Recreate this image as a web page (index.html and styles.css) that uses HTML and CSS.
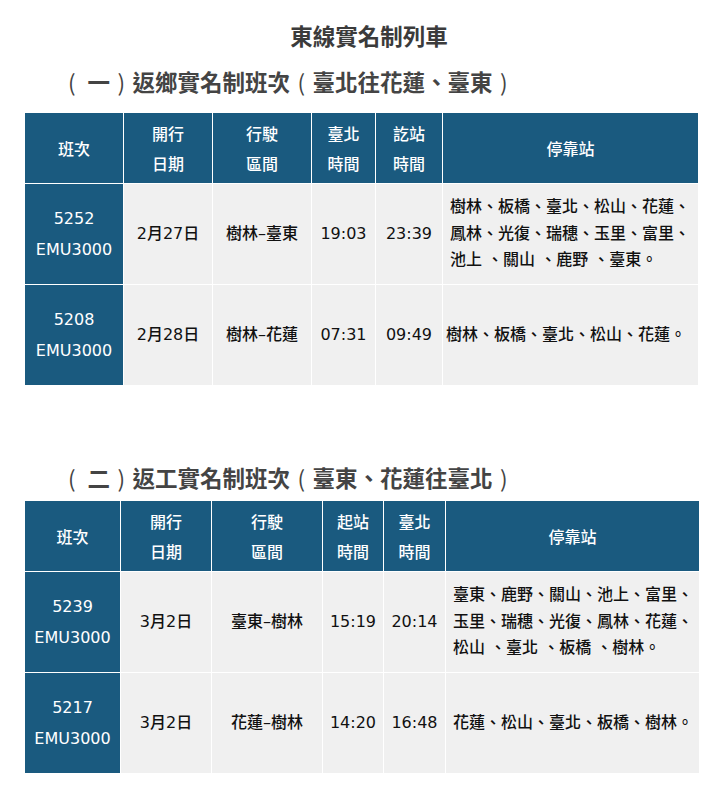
FILE: index.html
```html
<!DOCTYPE html>
<html lang="zh-Hant">
<head>
<meta charset="utf-8">
<title>東線實名制列車</title>
<link rel="stylesheet" href="styles.css">
</head>
<body>
<div class="page">
  <h1 class="title">東線實名制列車</h1>

  <h2 class="section-title"><span class="paren paren-open">(</span>一<span class="paren">)</span>返鄉實名制班次<span class="paren">(</span>臺北往花蓮、臺東<span class="paren">)</span></h2>
  <table class="schedule schedule-a">
    <colgroup>
      <col class="col-train"><col class="col-date"><col class="col-route"><col class="col-t1"><col class="col-t2"><col class="col-stops">
    </colgroup>
    <thead>
      <tr><th>班次</th><th>開行<br>日期</th><th>行駛<br>區間</th><th>臺北<br>時間</th><th>訖站<br>時間</th><th>停靠站</th></tr>
    </thead>
    <tbody>
      <tr>
        <th class="train">5252<br>EMU3000</th><td>2月27日</td><td>樹林–臺東</td><td>19:03</td><td>23:39</td>
        <td class="stops">樹林、板橋、臺北、松山、花蓮、鳳林、光復、瑞穗、玉里、富里、池上 、關山 、鹿野 、臺東。</td>
      </tr>
      <tr>
        <th class="train">5208<br>EMU3000</th><td>2月28日</td><td>樹林–花蓮</td><td>07:31</td><td>09:49</td>
        <td class="stops stops-single">樹林、板橋、臺北、松山、花蓮。</td>
      </tr>
    </tbody>
  </table>

  <h2 class="section-title section-second"><span class="paren paren-open">(</span>二<span class="paren">)</span>返工實名制班次<span class="paren">(</span>臺東、花蓮往臺北<span class="paren">)</span></h2>
  <table class="schedule schedule-b">
    <colgroup>
      <col class="col-train"><col class="col-date"><col class="col-route"><col class="col-t1"><col class="col-t2"><col class="col-stops">
    </colgroup>
    <thead>
      <tr><th>班次</th><th>開行<br>日期</th><th>行駛<br>區間</th><th>起站<br>時間</th><th>臺北<br>時間</th><th>停靠站</th></tr>
    </thead>
    <tbody>
      <tr>
        <th class="train">5239<br>EMU3000</th><td>3月2日</td><td>臺東–樹林</td><td>15:19</td><td>20:14</td>
        <td class="stops">臺東、鹿野、關山、池上、富里、玉里、瑞穗、光復、鳳林、花蓮、松山 、臺北 、板橋 、樹林。</td>
      </tr>
      <tr>
        <th class="train">5217<br>EMU3000</th><td>3月2日</td><td>花蓮–樹林</td><td>14:20</td><td>16:48</td>
        <td class="stops">花蓮、松山、臺北、板橋、樹林。</td>
      </tr>
    </tbody>
  </table>
</div>
</body>
</html>
```

FILE: styles.css
```css
html, body {
  margin: 0;
  padding: 0;
  background: #ffffff;
}

body {
  font-family: "DejaVu Sans", "Noto Sans CJK TC", sans-serif;
}

.page {
  width: 722px;
  box-sizing: border-box;
  padding: 20px 24px 0 24px;
}

.title {
  margin: 0;
  padding-left: 16px;
  font-family: "Noto Sans CJK TC", sans-serif;
  font-size: 22.5px;
  line-height: 30px;
  font-weight: 700;
  color: #3b3b3b;
  text-align: center;
}

.section-title {
  margin: 16px 0 16px 0;
  padding-left: 41px;
  font-family: "Noto Sans CJK TC", sans-serif;
  font-size: 22.5px;
  line-height: 30px;
  font-weight: 700;
  color: #444444;
}

.section-title .paren {
  display: inline-block;
  width: 1em;
  text-align: center;
  font-weight: 400;
}

.section-title .paren-open {
  text-align: left;
  padding-left: 3px;
  box-sizing: border-box;
}

.section-title.section-second {
  margin-top: 76px;
  margin-bottom: 8px;
}

.schedule {
  border-collapse: collapse;
  table-layout: fixed;
  font-size: 16px;
}

.schedule th,
.schedule td {
  border: 1px solid #ffffff;
  padding: 0 4px;
  text-align: center;
  vertical-align: middle;
}

.schedule thead tr {
  height: 71px;
}

.schedule tbody tr {
  height: 101px;
}

.schedule thead th {
  background: #1a5a7f;
  color: #ffffff;
  font-family: "Noto Sans CJK TC", sans-serif;
  font-weight: 500;
  line-height: 30px;
}

.schedule tbody td {
  background: #f0f0f0;
  color: #111111;
  font-weight: 500;
  line-height: 30px;
}

.schedule tbody th.train {
  background: #1a5a7f;
  color: #ffffff;
  font-weight: 400;
  line-height: 31px;
}

.schedule td.stops {
  text-align: left;
  padding: 0 4px 0 7px;
  line-height: 26.5px;
}

.schedule td.stops-single {
  padding-left: 3px;
}

.schedule-a { width: 674px; }
.schedule-a .col-train { width: 99px; }
.schedule-a .col-date { width: 89px; }
.schedule-a .col-route { width: 99px; }
.schedule-a .col-t1 { width: 64px; }
.schedule-a .col-t2 { width: 67px; }
.schedule-a .col-stops { width: 256px; }

.schedule-b { width: 675px; }
.schedule-b .col-train { width: 96px; }
.schedule-b .col-date { width: 91px; }
.schedule-b .col-route { width: 111px; }
.schedule-b .col-t1 { width: 61px; }
.schedule-b .col-t2 { width: 62px; }
.schedule-b .col-stops { width: 254px; }
```
